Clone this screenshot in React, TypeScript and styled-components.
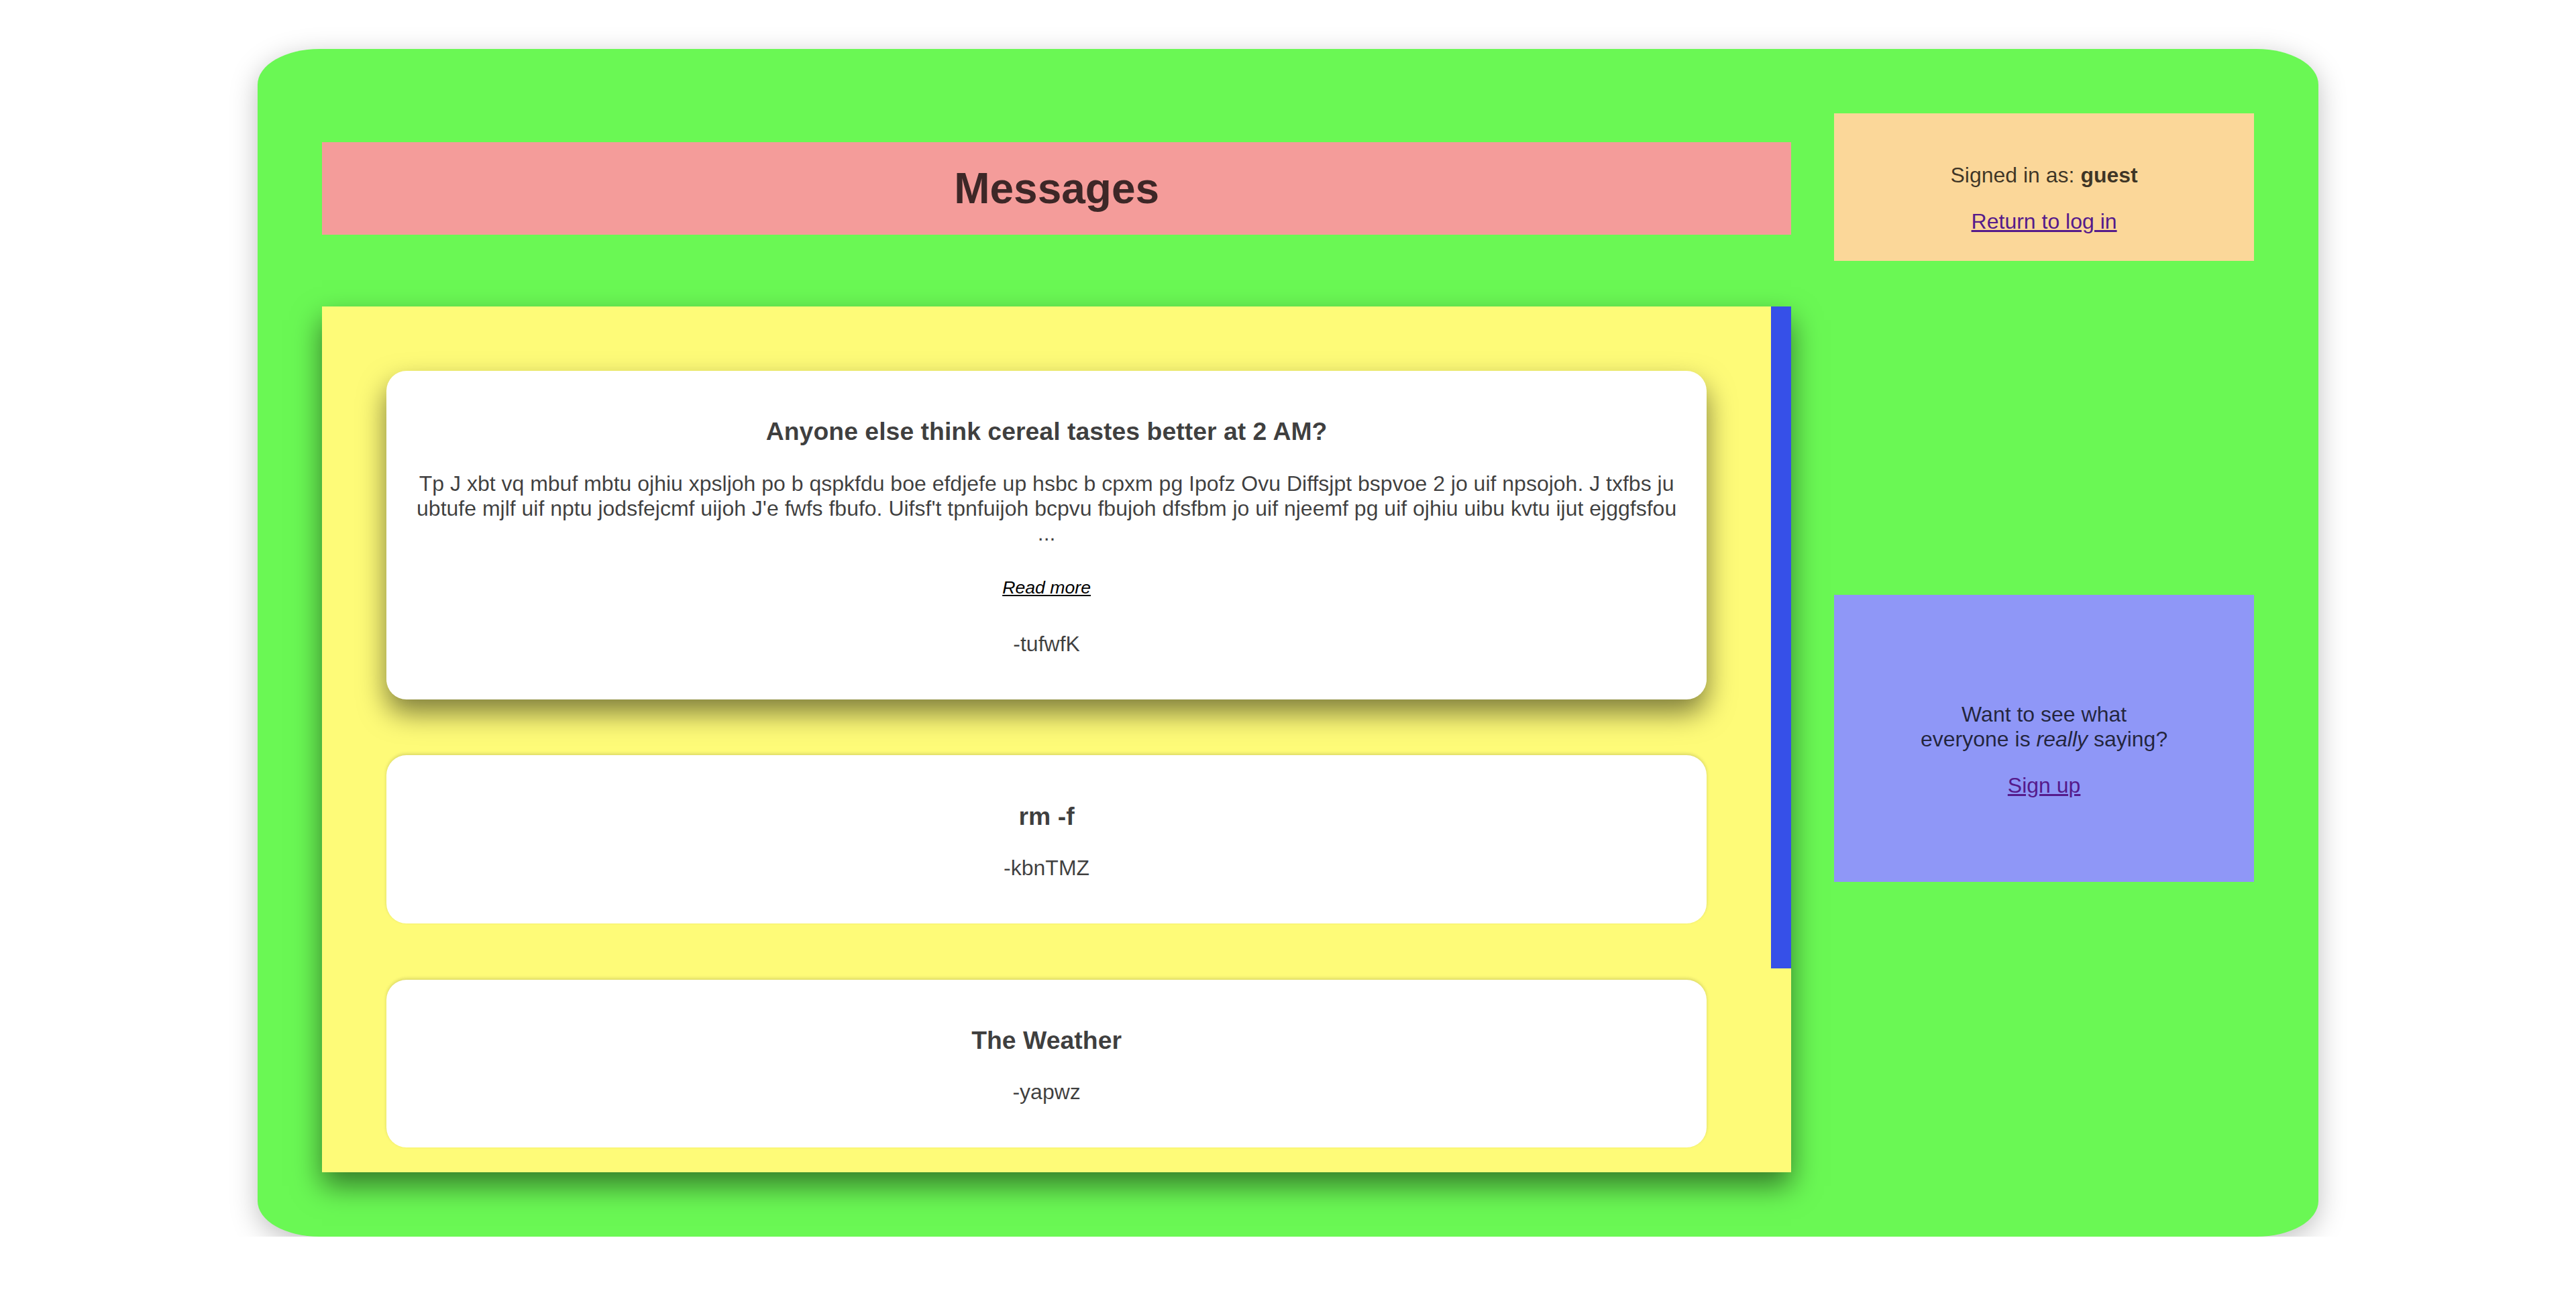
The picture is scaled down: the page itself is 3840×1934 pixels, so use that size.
import React from 'react';
import styled, { createGlobalStyle } from 'styled-components';

type Post = {
  id: number;
  title: string;
  body?: string;
  author: string;
  raised?: boolean;
};

const posts: Post[] = [
  {
    id: 1,
    title: 'Anyone else think cereal tastes better at 2 AM?',
    body:
      "Tp J xbt vq mbuf mbtu ojhiu xpsljoh po b qspkfdu boe efdjefe up hsbc b cpxm pg Ipofz Ovu Diffsjpt bspvoe 2 jo uif npsojoh. J txfbs ju ubtufe mjlf uif nptu jodsfejcmf uijoh J'e fwfs fbufo. Uifsf't tpnfuijoh bcpvu fbujoh dfsfbm jo uif njeemf pg uif ojhiu uibu kvtu ijut ejggfsfou ...",
    author: 'tufwfK',
    raised: true,
  },
  { id: 2, title: 'rm -f', author: 'kbnTMZ' },
  { id: 3, title: 'The Weather', author: 'yapwz' },
];

// the list is scrolled to the top; the thumb covers 1291 / 1689 of the track
const listHeight = 1291;
const contentHeight = 1689;

const App = () => {
  return (
    <>
      <GlobalStyle />
      <Panel>
        <MainColumn>
          <PageTitle>Messages</PageTitle>
          <ListFrame>
            <MessageList>
              {posts.map((post) => (
                <Card key={post.id} $raised={post.raised}>
                  <CardTitle>{post.title}</CardTitle>
                  {post.body && <CardBody>{post.body}</CardBody>}
                  {post.body && (
                    <ReadMoreRow>
                      <ReadMore href="#">Read more</ReadMore>
                    </ReadMoreRow>
                  )}
                  <Author>-{post.author}</Author>
                </Card>
              ))}
            </MessageList>
            <ScrollThumb
              style={{ height: `${(listHeight * listHeight) / contentHeight}px` }}
            />
          </ListFrame>
        </MainColumn>
        <SideColumn>
          <SideBox $bg="#fbd799" $height={220}>
            <p>
              Signed in as: <b>guest</b>
            </p>
            <p>
              <SideLink href="#">Return to log in</SideLink>
            </p>
          </SideBox>
          <SideBox $bg="#8f97f7" $height={428} $offset={498}>
            <p>
              Want to see what
              <br />
              everyone is <i>really</i> saying?
            </p>
            <p>
              <SideLink href="#">Sign up</SideLink>
            </p>
          </SideBox>
        </SideColumn>
      </Panel>
    </>
  );
};

export default App;

const GlobalStyle = createGlobalStyle`
  html, body {
    margin: 0;
    background: #ffffff;
  }

  body {
    font-family: "Liberation Sans", Arial, Helvetica, sans-serif;
    font-size: 32px;
    color: rgba(0, 0, 0, 0.75);
  }
`;

const Panel = styled.main`
  width: 80%;
  margin: 73px auto 0;
  padding: 96px;
  box-sizing: border-box;
  background: #6af854;
  border-radius: 3%;
  box-shadow: 0 10px 40px rgba(0, 0, 0, 0.25);
  display: grid;
  grid-template-columns: 3.5fr 1fr;
  column-gap: 64px;
  align-items: start;
`;

const MainColumn = styled.section`
  display: flex;
  flex-direction: column;
  min-width: 0;
`;

const PageTitle = styled.h1`
  margin: 42.88px 0;
  padding: 32px;
  background: #f49c9a;
  font-size: 64px;
  font-weight: bold;
  text-align: center;
`;

const ListFrame = styled.div`
  position: relative;
  margin-top: 64px;
  height: ${listHeight}px;
  background: #fefb78;
  box-shadow: 0 20px 40px rgba(0, 0, 0, 0.5);
`;

const MessageList = styled.div`
  height: 100%;
  box-sizing: border-box;
  padding: 96px 126px 96px 96px;
  overflow: hidden;
  display: flex;
  flex-direction: column;
  gap: 83.5px;
`;

const ScrollThumb = styled.div`
  position: absolute;
  top: 0;
  right: 0;
  width: 30px;
  background: #3650e8;
`;

const Card = styled.article<{ $raised?: boolean }>`
  flex-shrink: 0;
  padding: 32px;
  background: #ffffff;
  border-radius: 30px;
  text-align: center;
  box-shadow: ${({ $raised }) =>
    $raised ? '0 20px 40px rgba(0, 0, 0, 0.5)' : '0 -2px 5px rgba(0, 0, 0, 0.15)'};
`;

const CardTitle = styled.h3`
  margin: 37.44px 0;
  font-size: 37.44px;
  font-weight: bold;
`;

const CardBody = styled.p`
  margin: 32px 0;
`;

const ReadMoreRow = styled.p`
  margin: 47px 0 50px;
  font-size: 26.67px;
`;

const ReadMore = styled.a`
  color: #000000;
  font-style: italic;
  text-decoration: underline;
`;

const Author = styled.p`
  margin: 32px 0;
`;

const SideColumn = styled.aside`
  display: flex;
  flex-direction: column;
`;

const SideBox = styled.div<{ $bg: string; $height: number; $offset?: number }>`
  height: ${({ $height }) => $height}px;
  margin-top: ${({ $offset }) => $offset ?? 0}px;
  box-sizing: border-box;
  padding: 34px 24px 0;
  background: ${({ $bg }) => $bg};
  display: flex;
  flex-direction: column;
  justify-content: center;
  text-align: center;

  p {
    margin: 0;
  }

  p + p {
    margin-top: 32px;
  }
`;

const SideLink = styled.a`
  color: #551a8b;
  text-decoration: underline;
`;
